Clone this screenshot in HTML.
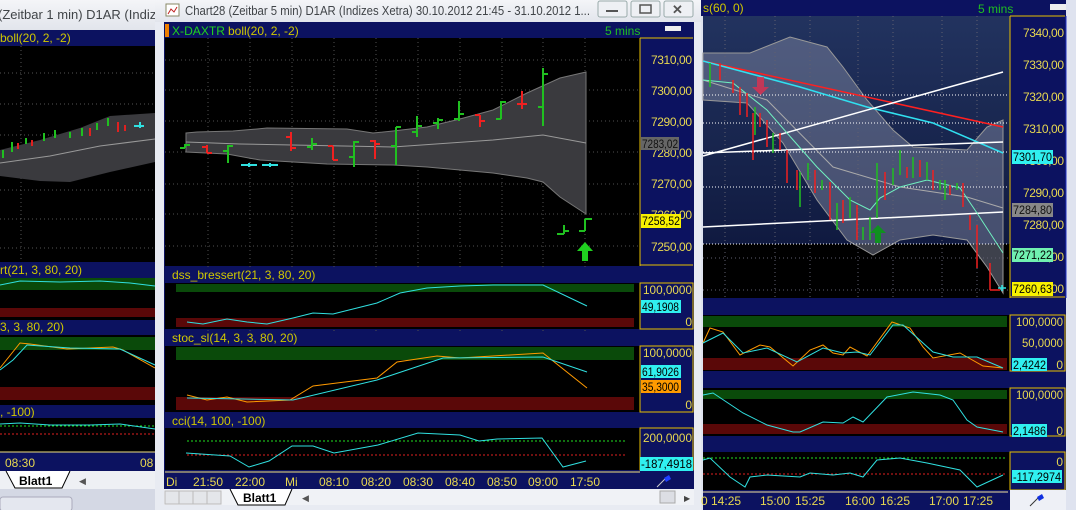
<!DOCTYPE html>
<html><head><meta charset="utf-8"><style>
html,body{margin:0;padding:0;width:1076px;height:510px;overflow:hidden;background:#d8dce8}
svg{display:block}
text{font-family:"Liberation Sans",sans-serif}
</style></head><body>
<svg width="1076" height="510" viewBox="0 0 1076 510" xmlns="http://www.w3.org/2000/svg">
<defs>
<linearGradient id="rg" x1="0" y1="0" x2="0" y2="1">
<stop offset="0" stop-color="#22335f"/><stop offset="1" stop-color="#101a40"/></linearGradient>
<linearGradient id="tb" x1="0" y1="0" x2="0" y2="1">
<stop offset="0" stop-color="#f4f5f8"/><stop offset="1" stop-color="#e2e5ec"/></linearGradient>
</defs>

<!-- ============ LEFT WINDOW ============ -->
<rect x="0" y="0" width="156" height="30" fill="url(#tb)"/>
<text x="-2" y="19" font-size="13" fill="#404448">(Zeitbar 1 min)  D1AR (Indize</text>
<rect x="0" y="30" width="156" height="16" fill="#0c1260"/>
<text x="0" y="42" font-size="12" fill="#d0c800">boll(20, 2, -2)</text>
<rect x="0" y="46" width="156" height="216" fill="#000"/>
<g stroke="#555" stroke-dasharray="1,3">
<line x1="0" y1="73" x2="156" y2="73"/><line x1="0" y1="104" x2="156" y2="104"/><line x1="0" y1="135" x2="156" y2="135"/>
<line x1="0" y1="190" x2="156" y2="190"/><line x1="0" y1="219" x2="156" y2="219"/><line x1="0" y1="248" x2="156" y2="248"/>
<line x1="21" y1="46" x2="21" y2="262"/><line x1="21" y1="265" x2="21" y2="470"/>
</g>
<polygon points="0,150 40,140 80,128 110,116 155,113 155,162 110,172 70,182 40,181 0,176" fill="#3a3a3e"/>
<polyline points="0,163 50,156 100,146 155,139" fill="none" stroke="#999" stroke-width="1"/>
<g stroke-width="2" fill="none">
<path d="M3,150v8M12,142v10M26,138v6M44,133v8M55,130v8M70,132v6M82,128v8M97,123v7M108,118v8" stroke="#20c020"/>
<path d="M18,143v6M32,140v6M90,128v8M118,122v10M125,125v6" stroke="#e02020"/>
<path d="M140,122v6M134,126h10" stroke="#30e0e0"/>
</g>
<rect x="0" y="262" width="156" height="16" fill="#0c1260"/>
<text x="0" y="274" font-size="12" fill="#d0c800">rt(21, 3, 80, 20)</text>
<rect x="0" y="278" width="156" height="42" fill="#000"/>
<rect x="0" y="278" width="156" height="12" fill="#0a4a0a"/>
<rect x="0" y="308" width="156" height="9" fill="#5a0808"/>
<polyline points="0,285 20,281 60,282 100,281 130,283 155,286" fill="none" stroke="#30e0e0"/>
<rect x="0" y="320" width="156" height="15" fill="#0c1260"/>
<text x="0" y="331" font-size="12" fill="#d0c800">3, 3, 80, 20)</text>
<rect x="0" y="335" width="156" height="70" fill="#000"/>
<rect x="0" y="337" width="156" height="13" fill="#0a4a0a"/>
<rect x="0" y="387" width="156" height="13" fill="#5a0808"/>
<polyline points="0,368 20,343 30,344 67,349 113,347 123,350 155,368" fill="none" stroke="#ff9a00"/>
<polyline points="0,370 13,360 27,345 70,348 120,349 155,365" fill="none" stroke="#30e0e0"/>
<rect x="0" y="405" width="156" height="13" fill="#0c1260"/>
<text x="0" y="416" font-size="12" fill="#d0c800">, -100)</text>
<rect x="0" y="418" width="156" height="34" fill="#000"/>
<line x1="0" y1="426" x2="156" y2="426" stroke="#20e020" stroke-dasharray="2,2"/>
<line x1="0" y1="434" x2="156" y2="434" stroke="#e02020" stroke-dasharray="2,2"/>
<polyline points="0,424 20,423 50,425 90,425 120,424 155,429" fill="none" stroke="#30e0e0"/>
<rect x="0" y="452" width="156" height="19" fill="#0c1260"/>
<line x1="0" y1="452" x2="156" y2="452" stroke="#f0e080"/>
<text x="5" y="467" font-size="12" fill="#e8d850">08:30</text>
<text x="140" y="467" font-size="12" fill="#e8d850">08</text>
<rect x="0" y="471" width="156" height="18" fill="#eef0f4"/>
<path d="M6,471 L15,488 L62,488 L70,471" fill="#fff" stroke="#000"/>
<text x="19" y="485" font-size="12" font-weight="bold" fill="#000">Blatt1</text>
<text x="79" y="484" font-size="9" fill="#555">◀</text>
<rect x="0" y="489" width="156" height="21" fill="#d4d8e4"/>
<rect x="0" y="497" width="72" height="14" rx="3" fill="#e4e7ef" stroke="#aab"/>

<!-- ============ MIDDLE WINDOW ============ -->
<rect x="155" y="0" width="546" height="510" fill="#e8ebf2"/>
<rect x="155" y="0" width="546" height="22" fill="url(#tb)"/>
<rect x="166" y="4" width="13" height="12" fill="#fff" stroke="#886"/>
<path d="M168,14 l3,-5 3,3 3,-5" stroke="#c02020" fill="none"/>
<text x="185" y="15" font-size="13" fill="#404448" textLength="405" lengthAdjust="spacingAndGlyphs">Chart28 (Zeitbar 5 min)  D1AR (Indizes Xetra) 30.10.2012 21:45 - 31.10.2012 1...</text>
<g fill="#eef0f4" stroke="#9aa">
<rect x="598" y="1" width="29" height="16" rx="2"/><rect x="631" y="1" width="29" height="16" rx="2"/><rect x="664" y="1" width="29" height="16" rx="2"/></g>
<rect x="606" y="10" width="12" height="2" fill="#555"/>
<rect x="640" y="5" width="11" height="8" fill="none" stroke="#555" stroke-width="1.5"/>
<text x="672" y="14" font-size="13" font-weight="bold" fill="#555">✕</text>
<rect x="164" y="22" width="530" height="467" fill="#0c1260"/>
<rect x="165" y="24" width="4" height="13" fill="#f08000"/>
<text x="172" y="35" font-size="12" fill="#20d020" textLength="53" lengthAdjust="spacingAndGlyphs">X-DAXTR</text>
<text x="228" y="35" font-size="12" fill="#d0c800">boll(20, 2, -2)</text>
<text x="605" y="35" font-size="12" fill="#20c020">5 mins</text>
<rect x="665" y="26" width="16" height="5" fill="#eee"/>
<rect x="165" y="38" width="475" height="228" fill="#000"/>
<g stroke="#505050" stroke-dasharray="1,3">
<line x1="165" y1="60" x2="640" y2="60"/><line x1="165" y1="90" x2="640" y2="90"/><line x1="165" y1="121" x2="640" y2="121"/><line x1="165" y1="152" x2="640" y2="152"/><line x1="165" y1="184" x2="640" y2="184"/><line x1="165" y1="214" x2="640" y2="214"/><line x1="165" y1="246" x2="640" y2="246"/>
<line x1="208" y1="38" x2="208" y2="470"/><line x1="250" y1="38" x2="250" y2="470"/><line x1="292" y1="38" x2="292" y2="470"/><line x1="334" y1="38" x2="334" y2="470"/><line x1="376" y1="38" x2="376" y2="470"/><line x1="418" y1="38" x2="418" y2="470"/><line x1="460" y1="38" x2="460" y2="470"/><line x1="502" y1="38" x2="502" y2="470"/><line x1="543" y1="38" x2="543" y2="470"/><line x1="585" y1="38" x2="585" y2="470"/>
</g>
<polygon points="186,133 197,132 233,131 257,129 267,128 347,129 373,133 393,131 427,127 460,119 493,110 527,93 560,78 586,72 586,214 560,197 543,182 527,178 493,173 427,167 393,165 327,164 260,160 227,154 186,152" fill="#3a3a3e" stroke="#777" stroke-width="1"/>
<polyline points="186,142 240,144 393,147 493,140 543,135 586,143" fill="none" stroke="#999"/>
<g stroke-width="2" fill="none">
<g stroke="#20c020">
<path d="M185,144v4M180,148h5M185,145h5"/>
<path d="M228,145v18M223,151h5M228,146h5"/>
<path d="M312,138v12M307,147h5M312,144h5"/>
<path d="M354,141v26M349,157h5M354,142h5"/>
<path d="M396,127v38M391,146h5M396,127h5"/>
<path d="M417,116v21M412,132h5M417,126h5"/>
<path d="M438,118v11M433,123h5M438,120h5"/>
<path d="M459,101v20M454,119h5M459,114h5"/>
<path d="M501,101v18M496,119h5M501,102h5"/>
<path d="M543,68v58M538,107h5M543,74h5"/>
<path d="M564,225v9M557,234h7M564,231h5"/>
<path d="M585,219v12M579,231h6M585,219h7"/>
</g>
<g stroke="#f02020">
<path d="M207,145v8M202,147h5M207,153h5"/>
<path d="M291,132v19M286,137h5M291,148h5"/>
<path d="M333,146v14M328,146h5M333,160h5"/>
<path d="M375,140v19M370,141h5M375,144h5"/>
<path d="M480,115v12M475,115h5M480,121h5"/>
<path d="M522,91v18M517,104h5M522,104h5"/>
</g>
<path d="M241,165h16M249,163v4M262,165h16M270,163v4" stroke="#30e0e0"/>
</g>
<path d="M585,242 l-8,9 h5 v10 h6 v-10 h5 z" fill="#20d020"/>
<!-- axis -->
<rect x="640" y="38" width="53" height="228" fill="#0c1260"/>
<path d="M640,38 H693 M640,265 H693" stroke="#e8c000"/>
<line x1="640" y1="38" x2="640" y2="266" stroke="#e8c000"/>
<g fill="#e8d850" font-size="12" text-anchor="end" lengthAdjust="spacingAndGlyphs">
<text x="692" y="64" textLength="41">7310,00</text><text x="692" y="95" textLength="41">7300,00</text><text x="692" y="126" textLength="41">7290,00</text><text x="692" y="157" textLength="41">7280,00</text><text x="692" y="188" textLength="41">7270,00</text><text x="692" y="219" textLength="41">7260,00</text><text x="692" y="251" textLength="41">7250,00</text></g>
<rect x="641" y="137" width="38" height="13" fill="#666"/>
<text x="642" y="148" font-size="12" fill="#111" textLength="36" lengthAdjust="spacingAndGlyphs">7283,02</text>
<rect x="641" y="214" width="40" height="14" fill="#f8f000"/>
<text x="642" y="225" font-size="12" fill="#000" textLength="38" lengthAdjust="spacingAndGlyphs">7258,52</text>
<!-- dss -->
<rect x="165" y="268" width="528" height="15" fill="#0c1260"/>
<text x="172" y="279" font-size="12" fill="#d0c800">dss_bressert(21, 3, 80, 20)</text>
<rect x="165" y="283" width="475" height="46" fill="#000"/>
<rect x="176" y="284" width="458" height="8" fill="#0a4a0a"/>
<rect x="176" y="318" width="458" height="9" fill="#5a0808"/>
<polyline points="187,322 203,324 227,319 247,322 267,324 293,318 313,313 333,314 377,303 400,293 427,288 460,286 493,285 543,285 587,306" fill="none" stroke="#30e0e0"/>
<rect x="640" y="283" width="53" height="46" fill="#0c1260" stroke="#e8c000"/>
<text x="692" y="294" font-size="12" fill="#e8d850" text-anchor="end" textLength="49" lengthAdjust="spacingAndGlyphs">100,0000</text>
<rect x="641" y="300" width="40" height="13" fill="#30f0f0"/><text x="642" y="311" font-size="12" fill="#000" textLength="37" lengthAdjust="spacingAndGlyphs">49,1908</text>
<text x="692" y="326" font-size="12" fill="#e8d850" text-anchor="end">0</text>
<!-- stoc -->
<rect x="165" y="331" width="528" height="15" fill="#0c1260"/>
<text x="172" y="342" font-size="12" fill="#d0c800">stoc_sl(14, 3, 3, 80, 20)</text>
<rect x="165" y="346" width="475" height="66" fill="#000"/>
<rect x="176" y="347" width="458" height="13" fill="#0a4a0a"/>
<rect x="176" y="397" width="458" height="13" fill="#5a0808"/>
<polyline points="187,395 207,400 227,397 247,402 290,400 313,386 377,378 397,362 437,356 460,358 543,353 587,388" fill="none" stroke="#ff9a00"/>
<polyline points="187,398 243,399 293,400 377,380 443,358 543,357 587,372" fill="none" stroke="#30e0e0"/>
<rect x="640" y="346" width="53" height="66" fill="#0c1260" stroke="#e8c000"/>
<text x="692" y="357" font-size="12" fill="#e8d850" text-anchor="end" textLength="49" lengthAdjust="spacingAndGlyphs">100,0000</text>
<rect x="641" y="365" width="40" height="13" fill="#30f0f0"/><text x="642" y="376" font-size="12" fill="#000" textLength="37" lengthAdjust="spacingAndGlyphs">61,9026</text>
<rect x="641" y="380" width="40" height="13" fill="#ff9a00"/><text x="642" y="391" font-size="12" fill="#000" textLength="37" lengthAdjust="spacingAndGlyphs">35,3000</text>
<text x="692" y="409" font-size="12" fill="#e8d850" text-anchor="end">0</text>
<!-- cci -->
<rect x="165" y="414" width="528" height="14" fill="#0c1260"/>
<text x="172" y="425" font-size="12" fill="#d0c800">cci(14, 100, -100)</text>
<rect x="165" y="428" width="475" height="42" fill="#000"/>
<line x1="187" y1="441" x2="626" y2="441" stroke="#20e020" stroke-dasharray="2,2"/>
<line x1="187" y1="455" x2="626" y2="455" stroke="#e02020" stroke-dasharray="2,2"/>
<polyline points="186,453 230,456 249,467 269,461 292,446 313,446 334,453 378,445 418,433 460,435 479,441 497,439 542,438 563,467 586,461" fill="none" stroke="#30e0e0"/>
<rect x="640" y="428" width="53" height="42" fill="#0c1260" stroke="#e8c000"/>
<text x="692" y="442" font-size="12" fill="#e8d850" text-anchor="end" textLength="49" lengthAdjust="spacingAndGlyphs">200,0000</text>
<rect x="640" y="457" width="53" height="14" fill="#30f0f0"/><text x="641" y="468" font-size="12" fill="#000" textLength="51" lengthAdjust="spacingAndGlyphs">-187,4918</text>
<!-- time axis -->
<rect x="165" y="471" width="475" height="18" fill="#0c1260"/>
<line x1="165" y1="472" x2="640" y2="472" stroke="#f0e080"/>
<g font-size="12" fill="#e8d850">
<text x="166" y="486">Di</text><text x="193" y="486">21:50</text><text x="235" y="486">22:00</text><text x="285" y="486">Mi</text><text x="319" y="486">08:10</text><text x="361" y="486">08:20</text><text x="403" y="486">08:30</text><text x="445" y="486">08:40</text><text x="487" y="486">08:50</text><text x="528" y="486">09:00</text><text x="570" y="486">17:50</text></g>
<rect x="640" y="471" width="54" height="18" fill="#0c1260"/>
<path d="M657,487 l8,-8" stroke="#ccc"/><path d="M664,478 l5,-3 2,4 -5,3z" fill="#2040ff"/>
<rect x="164" y="489" width="530" height="16" fill="#f0f2f6"/>
<g fill="#e4e6ea" stroke="#bbb"><rect x="165" y="491" width="14" height="13"/><rect x="179" y="491" width="14" height="13"/><rect x="193" y="491" width="14" height="13"/><rect x="207" y="491" width="14" height="13"/></g>
<path d="M230,489 L238,505 L285,505 L292,489" fill="#fff" stroke="#000"/>
<text x="243" y="502" font-size="12" font-weight="bold" fill="#000">Blatt1</text>
<text x="302" y="501" font-size="9" fill="#555">◀</text>
<rect x="660" y="491" width="15" height="12" fill="#dcdee4" stroke="#aaa"/>
<text x="684" y="501" font-size="8" fill="#444">▶</text>

<!-- ============ RIGHT WINDOW ============ -->
<rect x="701" y="0" width="375" height="510" fill="#dfe3ef"/>
<rect x="701" y="0" width="365" height="16" fill="#0c1260"/>
<text x="703" y="12" font-size="12" fill="#d0c800">s(60, 0)</text>
<text x="978" y="13" font-size="12" fill="#20c020">5 mins</text>
<rect x="1050" y="4" width="16" height="6" fill="#eee"/>
<rect x="703" y="16" width="307" height="228" fill="url(#rg)"/>
<rect x="703" y="244" width="307" height="54" fill="#000"/>
<polygon points="703,53 750,53 790,37 827,47 843,67 867,100 893,130 913,147 967,150 987,127 1003,120 1003,293 987,267 967,240 933,235 900,240 873,255 847,240 817,200 783,143 747,103 703,100" fill="#8a90a8" fill-opacity="0.45" stroke="#999" stroke-width="1"/>
<g stroke="#606070" stroke-dasharray="1,3">
<line x1="725" y1="16" x2="725" y2="298"/><line x1="775" y1="16" x2="775" y2="298"/><line x1="810" y1="16" x2="810" y2="298"/><line x1="858" y1="16" x2="858" y2="298"/><line x1="893" y1="16" x2="893" y2="298"/><line x1="942" y1="16" x2="942" y2="298"/><line x1="977" y1="16" x2="977" y2="298"/>
<line x1="703" y1="258" x2="1008" y2="258"/><line x1="703" y1="290" x2="1008" y2="290"/></g>
<g stroke="#fff" stroke-dasharray="1,2"><line x1="703" y1="95" x2="1008" y2="95"/><line x1="703" y1="123" x2="1008" y2="123"/><line x1="703" y1="152" x2="1008" y2="152"/><line x1="703" y1="187" x2="1008" y2="187"/><line x1="703" y1="244" x2="1008" y2="244"/></g>
<polyline points="703,80 767,100 833,167 900,187 967,197 1003,208" fill="none" stroke="#aaa"/>
<line x1="703" y1="61" x2="1003" y2="127" stroke="#ff2020" stroke-width="1.5"/>
<polyline points="703,61 800,87 867,107 933,123 1003,153" fill="none" stroke="#30e0f0" stroke-width="1.5"/>
<g stroke="#fff" stroke-width="1.5"><line x1="703" y1="153" x2="1003" y2="142"/><line x1="703" y1="156" x2="1003" y2="72"/><line x1="703" y1="227" x2="1003" y2="212"/></g>
<polyline points="703,80 733,83 767,110 787,133 817,167 850,200 870,210 880,198 900,187 927,180 960,188 977,213 1003,253" fill="none" stroke="#70f0c0"/>
<g stroke-width="1.5">
<g stroke="#20c020"><path d="M710,63v24M755,107v28M773,133v20M800,172v35M808,163v17M822,180v10M837,203v27M850,197v21M863,227v13M870,217v23M877,163v55M893,168v17M900,150v25M913,157v21M927,162v18M940,180v10M945,180v20M957,183v7"/></g>
<g stroke="#f02020"><path d="M720,63v17M733,80v13M740,87v28M747,93v24M753,113v47M760,113v14M767,120v27M780,133v17M787,150v33M797,170v20M815,170v23M830,182v38M843,200v23M857,205v35M885,172v28M907,167v11M920,160v17M933,170v20M950,185v10M963,183v24M970,215v15M977,225v43M990,263v27M990,290h10"/></g>
<path d="M998,288h8M1002,285v6" stroke="#30e0e0"/>
</g>
<path d="M757,77h7v10h5l-8.5,8 -8.5,-8h5z" fill="#e03050" fill-opacity="0.8"/>
<path d="M878,225 l-8,8 h5 v10 h6 v-10 h5z" fill="#109020"/>
<rect x="1010" y="16" width="56" height="282" fill="#0c1260"/>
<path d="M1010,16 H1065 M1010,297 H1065 M1010,16 V298" stroke="#e8c000"/>
<line x1="1066" y1="16" x2="1066" y2="298" stroke="#2030c0"/>
<g fill="#e8d850" font-size="12" text-anchor="end" lengthAdjust="spacingAndGlyphs">
<text x="1064" y="37" textLength="41">7340,00</text><text x="1064" y="69" textLength="41">7330,00</text><text x="1064" y="101" textLength="41">7320,00</text><text x="1064" y="133" textLength="41">7310,00</text><text x="1064" y="165" textLength="41">7300,00</text><text x="1064" y="197" textLength="41">7290,00</text><text x="1064" y="229" textLength="41">7280,00</text><text x="1064" y="261" textLength="41">7270,00</text><text x="1064" y="293" textLength="41">7260,00</text></g>
<g font-size="12" lengthAdjust="spacingAndGlyphs">
<rect x="1012" y="150" width="41" height="14" fill="#30f0f0"/><text x="1013" y="161" fill="#000" textLength="39" lengthAdjust="spacingAndGlyphs">7301,70</text>
<rect x="1012" y="203" width="41" height="14" fill="#888"/><text x="1013" y="214" fill="#111" textLength="39" lengthAdjust="spacingAndGlyphs">7284,80</text>
<rect x="1012" y="248" width="41" height="14" fill="#70f0b0"/><text x="1013" y="259" fill="#000" textLength="39" lengthAdjust="spacingAndGlyphs">7271,22</text>
<rect x="1012" y="282" width="41" height="14" fill="#f8f000"/><text x="1013" y="293" fill="#000" textLength="39" lengthAdjust="spacingAndGlyphs">7260,63</text>
</g>
<!-- right indicators -->
<rect x="703" y="298" width="363" height="192" fill="#0c1260"/>
<rect x="703" y="315" width="307" height="56" fill="#000"/>
<rect x="703" y="316" width="304" height="11" fill="#0a4a0a"/>
<rect x="703" y="358" width="304" height="12" fill="#5a0808"/>
<polyline points="703,343 710,328 723,332 740,355 760,345 770,347 793,366 810,350 823,345 833,353 843,355 850,347 867,356 892,322 910,328 923,347 933,358 960,353 983,366 1003,368" fill="none" stroke="#ff9a00"/>
<polyline points="703,343 723,333 743,353 767,348 797,362 823,348 843,353 857,352 870,355 893,325 903,325 933,352 953,357 977,357 1003,368" fill="none" stroke="#30e0e0"/>
<rect x="1010" y="315" width="55" height="56" fill="#0c1260" stroke="#e8c000"/>
<text x="1063" y="326" font-size="12" fill="#e8d850" text-anchor="end" textLength="47" lengthAdjust="spacingAndGlyphs">100,0000</text>
<text x="1063" y="347" font-size="12" fill="#e8d850" text-anchor="end" textLength="41" lengthAdjust="spacingAndGlyphs">50,0000</text>
<rect x="1012" y="358" width="35" height="13" fill="#30f0f0"/><text x="1013" y="369" font-size="12" fill="#000" textLength="33" lengthAdjust="spacingAndGlyphs">2,4242</text>
<text x="1063" y="369" font-size="12" fill="#e8d850" text-anchor="end">0</text>
<rect x="703" y="388" width="307" height="48" fill="#000"/>
<rect x="703" y="390" width="304" height="9" fill="#0a4a0a"/>
<rect x="703" y="424" width="304" height="10" fill="#5a0808"/>
<polyline points="703,395 713,393 743,413 767,425 793,432 800,432 823,422 843,423 853,417 863,422 887,397 913,392 940,395 953,400 967,420 977,427 1003,432" fill="none" stroke="#30e0e0"/>
<rect x="1010" y="388" width="55" height="48" fill="#0c1260" stroke="#e8c000"/>
<text x="1063" y="399" font-size="12" fill="#e8d850" text-anchor="end" textLength="47" lengthAdjust="spacingAndGlyphs">100,0000</text>
<rect x="1012" y="424" width="35" height="13" fill="#30f0f0"/><text x="1013" y="435" font-size="12" fill="#000" textLength="33" lengthAdjust="spacingAndGlyphs">2,1486</text>
<text x="1063" y="435" font-size="12" fill="#e8d850" text-anchor="end">0</text>
<rect x="703" y="452" width="307" height="38" fill="#000"/>
<line x1="703" y1="458" x2="1007" y2="458" stroke="#20e020" stroke-dasharray="2,2"/>
<line x1="703" y1="474" x2="1007" y2="474" stroke="#e02020" stroke-dasharray="2,2"/>
<polyline points="703,460 710,458 730,477 745,487 750,477 767,475 800,477 810,473 833,475 850,473 863,477 877,460 900,458 927,463 960,470 977,487 1003,475" fill="none" stroke="#30e0e0"/>
<rect x="1010" y="452" width="55" height="38" fill="#0c1260" stroke="#e8c000"/>
<text x="1063" y="466" font-size="12" fill="#e8d850" text-anchor="end">0</text>
<rect x="1012" y="470" width="50" height="13" fill="#30f0f0"/><text x="1013" y="481" font-size="12" fill="#000" textLength="48" lengthAdjust="spacingAndGlyphs">-117,2974</text>
<rect x="703" y="490" width="307" height="20" fill="#0c1260"/>
<line x1="703" y1="492" x2="1008" y2="492" stroke="#f0e0a0"/>
<g font-size="12" fill="#e8d850"><text x="701" y="505">0 14:25</text><text x="760" y="505">15:00</text><text x="795" y="505">15:25</text><text x="845" y="505">16:00</text><text x="880" y="505">16:25</text><text x="929" y="505">17:00</text><text x="963" y="505">17:25</text></g>
<rect x="1010" y="490" width="56" height="20" fill="#eef0f6"/>
<path d="M1030,506 l8,-8" stroke="#333"/><path d="M1037,497 l5,-3 2,4 -5,3z" fill="#1030e0"/>
</svg>
</body></html>
